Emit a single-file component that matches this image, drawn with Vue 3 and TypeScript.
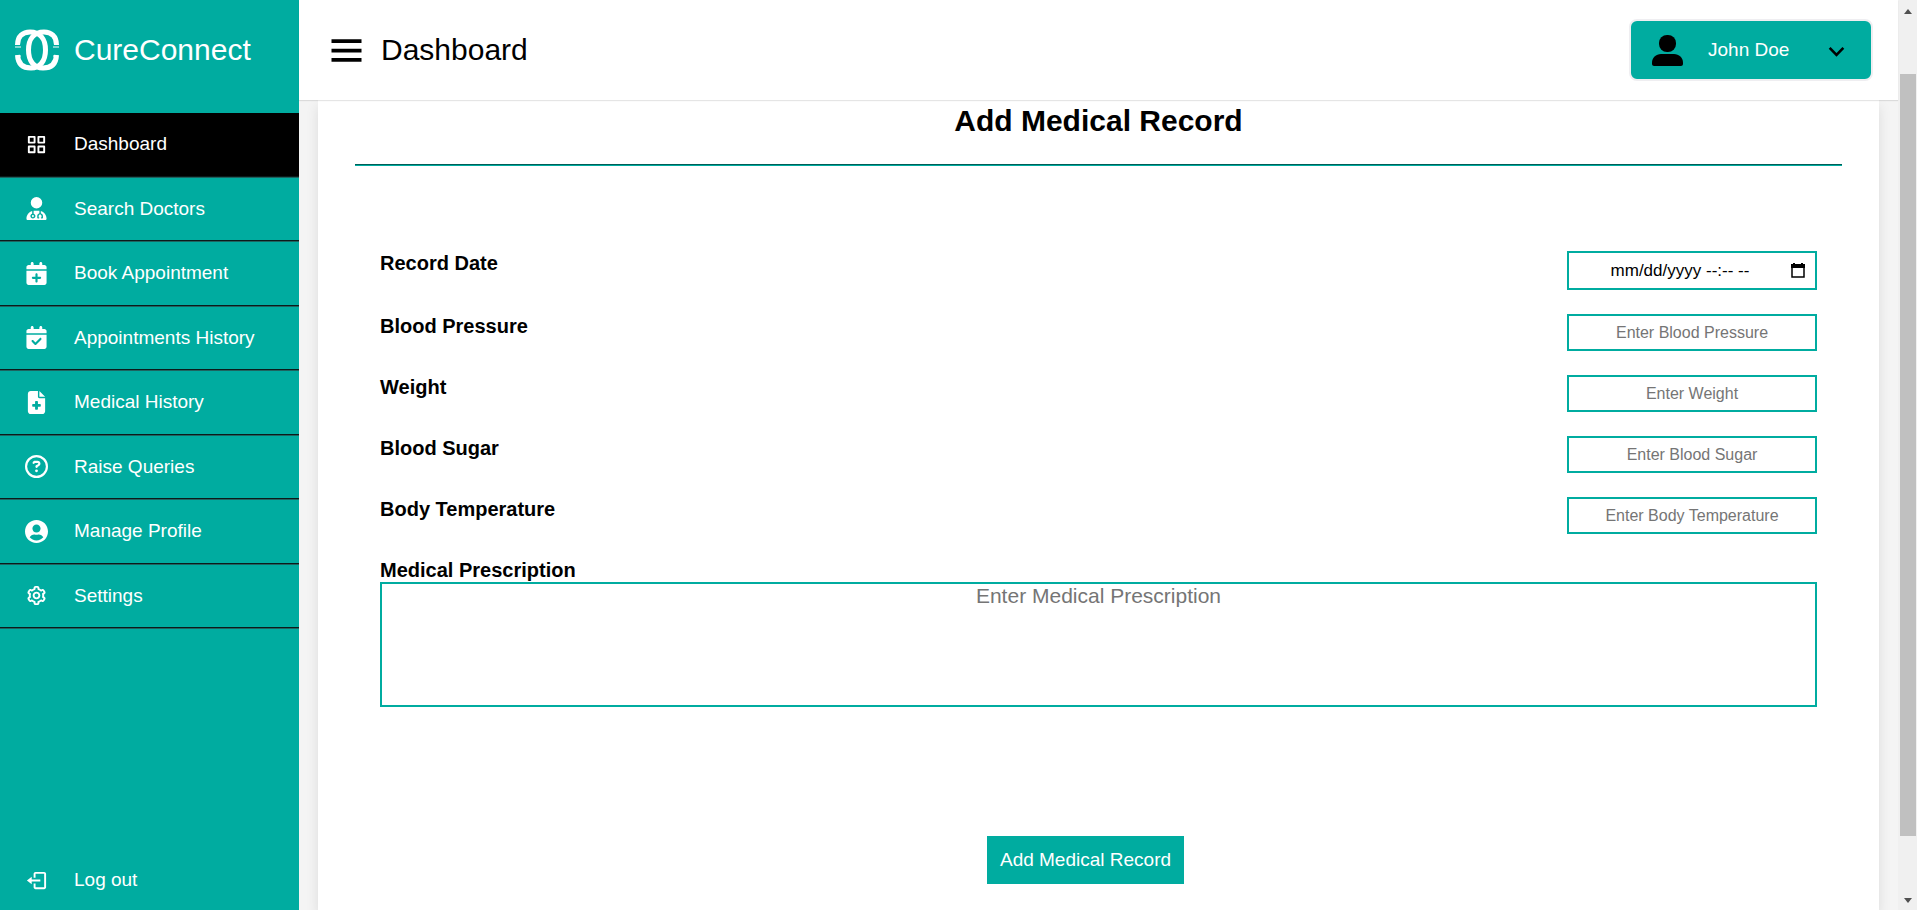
<script setup lang="ts">
import { ref } from 'vue'

interface NavItem {
  label: string
  viewBox: string
  paths: string[]
}

interface Field {
  id: string
  label: string
  placeholder: string
  picker?: boolean
}

const calendar =
  'M128 0c17.7 0 32 14.3 32 32V64H288V32c0-17.7 14.3-32 32-32s32 14.3 32 32V64h48c26.5 0 48 21.5 48 48v48H0V112C0 85.5 21.5 64 48 64H96V32c0-17.7 14.3-32 32-32zM0 192H448V464c0 26.5-21.5 48-48 48H48c-26.5 0-48-21.5-48-48V192z'

const navItems: NavItem[] = [
  {
    label: 'Dashboard',
    viewBox: '0 0 24 24',
    paths: [
      'M10 3H4a1 1 0 0 0-1 1v6a1 1 0 0 0 1 1h6a1 1 0 0 0 1-1V4a1 1 0 0 0-1-1zM9 9H5V5h4zm11-6h-6a1 1 0 0 0-1 1v6a1 1 0 0 0 1 1h6a1 1 0 0 0 1-1V4a1 1 0 0 0-1-1zm-1 6h-4V5h4zm-9 4H4a1 1 0 0 0-1 1v6a1 1 0 0 0 1 1h6a1 1 0 0 0 1-1v-6a1 1 0 0 0-1-1zm-1 6H5v-4h4zm11-6h-6a1 1 0 0 0-1 1v6a1 1 0 0 0 1 1h6a1 1 0 0 0 1-1v-6a1 1 0 0 0-1-1zm-1 6h-4v-4h4z',
    ],
  },
  {
    label: 'Search Doctors',
    viewBox: '0 0 448 512',
    paths: [
      'M224 256A128 128 0 1 0 224 0a128 128 0 1 0 0 256zm-96 55.2C54 332.9 0 401.3 0 482.3C0 498.7 13.3 512 29.7 512l388.6 0c16.4 0 29.7-13.3 29.7-29.7c0-81-54-149.4-128-171.1l0 50.8c27.6 7.1 48 32.2 48 62l0 40c0 8.8-7.2 16-16 16l-16 0c-8.8 0-16-7.2-16-16s7.2-16 16-16l0-24c0-17.7-14.3-32-32-32s-32 14.3-32 32l0 24c8.8 0 16 7.2 16 16s-7.2 16-16 16l-16 0c-8.8 0-16-7.2-16-16l0-40c0-29.8 20.4-54.9 48-62l0-57.1c-6-.6-12.1-.9-18.3-.9l-91.4 0c-6.2 0-12.3 .3-18.3 .9l0 65.4c23.1 6.9 40 28.3 40 53.7c0 30.9-25.1 56-56 56s-56-25.1-56-56c0-25.4 16.9-46.8 40-53.7l0-59.1zM144 448a24 24 0 1 0 0-48 24 24 0 1 0 0 48z',
    ],
  },
  {
    label: 'Book Appointment',
    viewBox: '0 0 448 512',
    paths: [
      calendar +
        'M248 272c0-13.3-10.7-24-24-24s-24 10.7-24 24v56H144c-13.3 0-24 10.7-24 24s10.7 24 24 24h56v56c0 13.3 10.7 24 24 24s24-10.7 24-24V376h56c13.3 0 24-10.7 24-24s-10.7-24-24-24H248V272z',
    ],
  },
  {
    label: 'Appointments History',
    viewBox: '0 0 448 512',
    paths: [
      calendar +
        'M329 305c9.4-9.4 9.4-24.6 0-33.9s-24.6-9.4-33.9 0l-95 95-47-47c-9.4-9.4-24.6-9.4-33.9 0s-9.4 24.6 0 33.9l64 64c9.4 9.4 24.6 9.4 33.9 0L329 305z',
    ],
  },
  {
    label: 'Medical History',
    viewBox: '0 0 384 512',
    paths: [
      'M64 0C28.7 0 0 28.7 0 64V448c0 35.3 28.7 64 64 64H320c35.3 0 64-28.7 64-64V160H256c-17.7 0-32-14.3-32-32V0H64zM256 0V128H384L256 0zM160 240c0-8.8 7.2-16 16-16h32c8.8 0 16 7.2 16 16v48h48c8.8 0 16 7.2 16 16v32c0 8.8-7.2 16-16 16H224v48c0 8.8-7.2 16-16 16H176c-8.8 0-16-7.2-16-16V352H112c-8.8 0-16-7.2-16-16V304c0-8.8 7.2-16 16-16h48V240z',
    ],
  },
  {
    label: 'Raise Queries',
    viewBox: '0 0 512 512',
    paths: [
      'M464 256A208 208 0 1 0 48 256a208 208 0 1 0 416 0zM0 256a256 256 0 1 1 512 0A256 256 0 1 1 0 256zm169.8-90.7c7.9-22.3 29.1-37.3 52.8-37.3l58.3 0c34.9 0 63.1 28.3 63.1 63.1c0 22.6-12.1 43.5-31.7 54.8L280 264.4c-.2 13-10.9 23.6-24 23.6c-13.3 0-24-10.7-24-24l0-13.5c0-8.6 4.6-16.5 12.1-20.8l44.3-25.4c4.7-2.7 7.6-7.7 7.6-13.1c0-8.4-6.8-15.1-15.1-15.1l-58.3 0c-3.4 0-6.4 2.1-7.5 5.3l-.4 1.2c-4.4 12.5-18.2 19-30.7 14.6s-19-18.2-14.6-30.7l.4-1.2zM224 352a32 32 0 1 1 64 0 32 32 0 1 1 -64 0z',
    ],
  },
  {
    label: 'Manage Profile',
    viewBox: '0 8 496 496',
    paths: [
      'M248 8C111 8 0 119 0 256s111 248 248 248 248-111 248-248S385 8 248 8zm0 96c48.6 0 88 39.4 88 88s-39.4 88-88 88-88-39.4-88-88 39.4-88 88-88zm0 344c-58.7 0-111.3-26.6-146.5-68.2 18.8-35.4 55.6-59.8 98.5-59.8 2.4 0 4.8.4 7.1 1.1 13 4.2 26.6 6.9 40.9 6.9 14.3 0 28-2.7 40.9-6.9 2.3-.7 4.7-1.1 7.1-1.1 42.9 0 79.7 24.4 98.5 59.8C359.3 421.4 306.7 448 248 448z',
    ],
  },
  {
    label: 'Settings',
    viewBox: '0 0 24 24',
    paths: [
      'M12 16c2.206 0 4-1.794 4-4s-1.794-4-4-4-4 1.794-4 4 1.794 4 4 4zm0-6c1.084 0 2 .916 2 2s-.916 2-2 2-2-.916-2-2 .916-2 2-2z',
      'm2.845 16.136 1 1.73c.531.917 1.809 1.261 2.73.73l.529-.306A8.1 8.1 0 0 0 9 19.402V20c0 1.103.897 2 2 2h2c1.103 0 2-.897 2-2v-.598a8.132 8.132 0 0 0 1.896-1.111l.529.306c.923.53 2.198.188 2.731-.731l.999-1.729a2.001 2.001 0 0 0-.731-2.732l-.505-.292a7.718 7.718 0 0 0 0-2.224l.505-.292a2.002 2.002 0 0 0 .731-2.732l-.999-1.729c-.531-.92-1.808-1.265-2.731-.732l-.529.306A8.1 8.1 0 0 0 15 4.598V4c0-1.103-.897-2-2-2h-2c-1.103 0-2 .897-2 2v.598a8.132 8.132 0 0 0-1.896 1.111l-.529-.306c-.924-.531-2.2-.187-2.731.732l-.999 1.729a2.001 2.001 0 0 0 .731 2.732l.505.292a7.683 7.683 0 0 0 0 2.223l-.505.292a2.003 2.003 0 0 0-.731 2.733zm3.326-2.758A5.703 5.703 0 0 1 6 12c0-.462.058-.926.17-1.378a.999.999 0 0 0-.47-1.108l-1.123-.65.998-1.729 1.145.662a.997.997 0 0 0 1.188-.142 6.071 6.071 0 0 1 2.384-1.399A1 1 0 0 0 11 5.3V4h2v1.3a1 1 0 0 0 .708.956 6.083 6.083 0 0 1 2.384 1.399.999.999 0 0 0 1.188.142l1.144-.661 1 1.729-1.124.649a1 1 0 0 0-.47 1.108c.112.452.17.916.17 1.378 0 .461-.058.925-.171 1.378a1 1 0 0 0 .471 1.108l1.123.649-.998 1.729-1.145-.661a.996.996 0 0 0-1.188.142 6.071 6.071 0 0 1-2.384 1.399A1 1 0 0 0 13 18.7l.002 1.3H11v-1.3a1 1 0 0 0-.708-.956 6.083 6.083 0 0 1-2.384-1.399.992.992 0 0 0-1.188-.141l-1.144.662-1-1.729 1.124-.651a1 1 0 0 0 .471-1.108z',
    ],
  },
]

const fields: Field[] = [
  { id: 'record-date', label: 'Record Date', placeholder: 'mm/dd/yyyy --:-- --', picker: true },
  { id: 'blood-pressure', label: 'Blood Pressure', placeholder: 'Enter Blood Pressure' },
  { id: 'weight', label: 'Weight', placeholder: 'Enter Weight' },
  { id: 'blood-sugar', label: 'Blood Sugar', placeholder: 'Enter Blood Sugar' },
  { id: 'body-temperature', label: 'Body Temperature', placeholder: 'Enter Body Temperature' },
]

const active = ref('Dashboard')
const values = ref<Record<string, string>>({})
const prescription = ref('')
</script>

<template>
  <div class="page">
    <aside class="sidebar">
      <div class="brand">
        <svg class="logo" viewBox="0 0 46 42" aria-hidden="true">
          <path d="M3.500 16C3.500 7 9 3 16 3C26 3 31.500 10 31.500 21S26 39 17 39C9 39 4 35 3.500 26" />
          <path d="M42.500 16C42.500 7 37 3 30 3C20 3 14.500 10 14.500 21S20 39 29 39C37 39 42 35 42.500 26" />
          <path class="serif" d="M1 18h6M39 18h6M2 27h5M39 27h5" />
        </svg>
        <span class="brand-name">CureConnect</span>
      </div>
      <nav>
        <ul class="nav-list">
          <li v-for="item in navItems" :key="item.label">
            <a
              href="#"
              class="nav-link"
              :class="{ active: active === item.label }"
              @click.prevent="active = item.label"
            >
              <svg class="icon" :viewBox="item.viewBox" aria-hidden="true">
                <path v-for="(d, i) in item.paths" :key="i" :d="d" fill-rule="evenodd" />
              </svg>
              <span>{{ item.label }}</span>
            </a>
          </li>
        </ul>
      </nav>
      <a href="#" class="nav-link logout" @click.prevent>
        <svg class="icon" viewBox="0 0 24 24" aria-hidden="true">
          <path d="m2 12 5 4v-3h9v-2H7V8z" />
          <path d="M20 3H11c-1.100 0-2 .9-2 2v4h2V5h9v14h-9v-4H9v4c0 1.100.9 2 2 2h9c1.100 0 2-.9 2-2V5c0-1.100-.9-2-2-2z" />
        </svg>
        <span>Log out</span>
      </a>
    </aside>

    <div class="main">
      <header class="topbar">
        <button type="button" class="menu-button" aria-label="Toggle menu">
          <svg viewBox="0 0 24 24" aria-hidden="true"><path d="M4 6h16v2H4zm0 5h16v2H4zm0 5h16v2H4z" /></svg>
        </button>
        <span class="page-name">Dashboard</span>
        <button type="button" class="profile">
          <svg class="avatar" viewBox="0 0 31 31" aria-hidden="true">
            <rect x="7" width="17" height="17" rx="8" />
            <path d="M9 19h13c5 0 9 4 9 8.500V29c0 1-1 2-2 2H2c-1 0-2-1-2-2v-1.500C0 23 4 19 9 19z" />
          </svg>
          <span class="user-name">John Doe</span>
          <svg class="chevron" viewBox="0 0 24 24" aria-hidden="true">
            <path d="m6.700 10 5.300 5.400L17.300 10" />
          </svg>
        </button>
      </header>

      <main class="content">
        <section class="card">
          <h1>Add Medical Record</h1>
          <hr />
          <form @submit.prevent>
            <div v-for="field in fields" :key="field.id" class="field">
              <label :for="field.id">{{ field.label }}</label>
              <div class="control" :class="{ dated: field.picker }">
                <input :id="field.id" v-model="values[field.id]" type="text" :placeholder="field.placeholder" />
                <button v-if="field.picker" type="button" class="picker" aria-label="Show date picker">
                  <svg viewBox="0 0 14 15" aria-hidden="true">
                    <path d="M1 2h12v12H1z" fill="none" stroke="#000" stroke-width="1.500" />
                    <path d="M0 1h14v4H0zM2 0h2v2H2zm8 0h2v2h-2z" />
                  </svg>
                </button>
              </div>
            </div>
            <div class="field stacked">
              <label for="prescription">Medical Prescription</label>
              <textarea id="prescription" v-model="prescription" placeholder="Enter Medical Prescription"></textarea>
            </div>
            <div class="actions">
              <button type="submit" class="submit">Add Medical Record</button>
            </div>
          </form>
        </section>
      </main>
    </div>

    <div class="scrollbar" aria-hidden="true">
      <svg viewBox="0 0 8 5"><path d="M4 0 8 5H0z" /></svg>
      <div class="track"><div class="thumb"></div></div>
      <svg viewBox="0 0 8 5"><path d="M0 0h8L4 5z" /></svg>
    </div>
  </div>
</template>

<style>
body {
  margin: 0;
  overflow: hidden;
}
</style>

<style scoped>
.page,
.page * {
  box-sizing: border-box;
}

.page {
  display: flex;
  height: 100vh;
  overflow: hidden;
  background: #f4f4f4;
  color: #000;
  font-family: 'Liberation Sans', Arial, sans-serif;
}

button,
input,
textarea {
  font-family: inherit;
}

.sidebar {
  display: flex;
  flex: none;
  flex-direction: column;
  width: 299px;
  background: #00aca0;
  color: #fff;
}

.brand {
  display: flex;
  flex: none;
  align-items: center;
  gap: 14px;
  height: 113px;
  padding: 0 0 14px 14px;
}

.logo {
  width: 46px;
  height: 42px;
  fill: none;
  stroke: #fff;
  stroke-width: 5;
}

.logo .serif {
  stroke-width: 1;
}

.brand-name,
.page-name {
  font-size: 30px;
  line-height: 36px;
}

.nav-list {
  display: grid;
  grid-template-rows: repeat(8, 1fr);
  height: 516px;
  margin: 0;
  padding: 0;
  list-style: none;
}

.nav-list li {
  display: flex;
  border-bottom: 1px solid #1e6460;
}

.nav-list .nav-link {
  border-bottom: 1px solid #0b1b1b;
}

.nav-link {
  display: flex;
  flex: 1;
  align-items: center;
  gap: 26px;
  padding-left: 25px;
  color: #fff;
  font-size: 19px;
  line-height: 22px;
  text-decoration: none;
}

.nav-link.active {
  background: #000;
}

.icon {
  width: 23px;
  height: 23px;
  fill: currentColor;
}

.logout {
  flex: none;
  height: 60px;
  margin-top: auto;
}

.main {
  display: flex;
  flex: 1;
  flex-direction: column;
  min-width: 0;
}

.topbar {
  position: relative;
  z-index: 1;
  display: flex;
  flex: none;
  align-items: center;
  height: 100px;
  padding: 0 25px;
  background: #fff;
  box-shadow: 0 1px 1px rgba(0, 0, 0, 0.1);
}

.menu-button {
  display: flex;
  margin-right: 12px;
  padding: 0;
  border: 0;
  background: none;
}

.menu-button svg {
  width: 45px;
  height: 45px;
}

.profile {
  display: flex;
  align-items: center;
  width: 244px;
  height: 62px;
  margin-left: auto;
  padding: 0 19px 0 21px;
  border: 2px solid #efeef1;
  border-radius: 8px;
  background: #00aca0;
  color: #fff;
  font-size: 19px;
}

.avatar {
  width: 31px;
  height: 31px;
  margin-right: 25px;
}

.chevron {
  width: 31px;
  height: 31px;
  margin-left: auto;
  fill: none;
  stroke: #000;
  stroke-width: 2;
}

.content {
  display: flex;
  flex: 1;
  min-height: 0;
  padding: 0 19px;
}

.card {
  flex: 1;
  padding: 4px 37px 0;
  background: #fff;
  box-shadow: 0 6px 12px rgba(0, 0, 0, 0.1);
}

h1 {
  margin: 0 0 26px;
  font-size: 30px;
  line-height: 34px;
  text-align: center;
}

hr {
  margin: 0;
  border: 0;
  border-top: 1px solid #005e57;
  border-bottom: 1px solid #00aca0;
}

form {
  display: flex;
  flex-direction: column;
  gap: 24px;
  padding: 85px 25px 0;
}

.field {
  display: flex;
  align-items: flex-start;
  justify-content: space-between;
}

.field.stacked {
  flex-direction: column;
}

label {
  font-size: 20px;
  font-weight: bold;
  line-height: 24px;
}

.control {
  display: flex;
  align-items: center;
  width: 250px;
  height: 37px;
}

.control,
textarea {
  border: 2px solid #00aca0;
  background: #fff;
}

.control.dated {
  height: 39px;
  padding-right: 10px;
}

input {
  flex: 1;
  min-width: 0;
  height: 100%;
  margin: 0;
  padding: 0 2px;
  border: 0;
  background: none;
  font-size: 16px;
  text-align: center;
}

.dated input {
  font-size: 17px;
}

input::placeholder,
textarea::placeholder {
  color: #757575;
}

.dated input::placeholder {
  color: #000;
}

.picker {
  display: flex;
  padding: 0;
  border: 0;
  background: none;
}

.picker svg {
  width: 14px;
  height: 15px;
}

textarea {
  width: 100%;
  height: 125px;
  margin: 0;
  padding: 0 2px;
  border-radius: 0;
  font-size: 21px;
  text-align: center;
  resize: none;
}

.actions {
  display: flex;
  justify-content: center;
  padding: 105px 26px 0 0;
}

.submit {
  height: 48px;
  padding: 0 13px;
  border: 0;
  background: #00aca0;
  color: #fff;
  font-size: 19px;
}

.scrollbar {
  display: flex;
  flex: none;
  flex-direction: column;
  align-items: center;
  gap: 9px;
  width: 19px;
  padding: 9px 0 7px;
  background: #f0f0f0;
}

.scrollbar svg {
  width: 8px;
  height: 5px;
  fill: #505050;
}

.track {
  display: flex;
  flex: 1;
  padding: 51px 0 53px;
}

.thumb {
  width: 16px;
  background: #c0c0c0;
}
</style>
